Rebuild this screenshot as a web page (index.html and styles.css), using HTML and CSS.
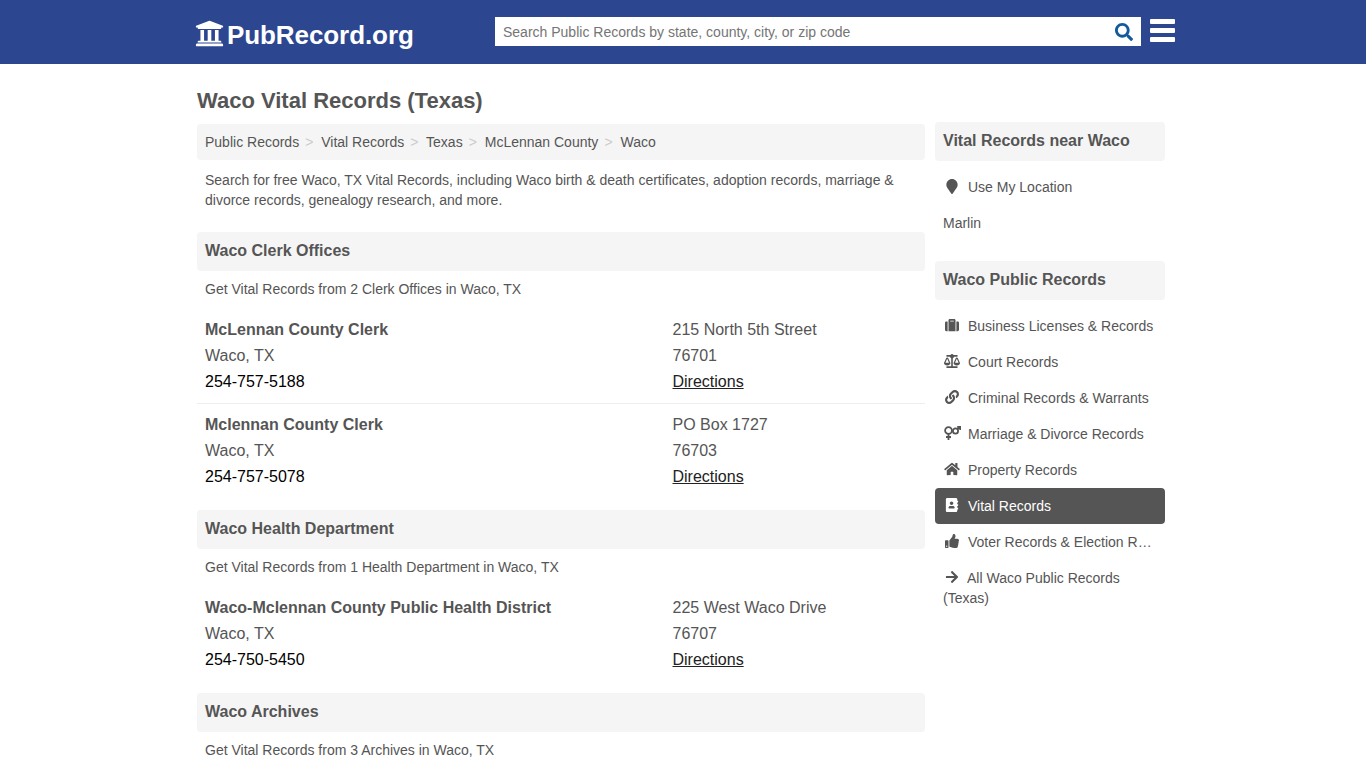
FILE: index.html
```html
<!DOCTYPE html>
<html lang="en">
<head>
<meta charset="utf-8">
<title>Waco Vital Records (Texas)</title>
<link rel="stylesheet" href="styles.css">
</head>
<body>
<header class="topbar">
  <div class="topbar-inner">
    <a class="logo" href="#">
      <svg class="logo-icon" viewBox="0 0 512 512"><path d="M496 128v16a8 8 0 0 1-8 8h-24v12c0 6.627-5.373 12-12 12H60c-6.627 0-12-5.373-12-12v-12H24a8 8 0 0 1-8-8v-16a8 8 0 0 1 4.941-7.392l232-88a7.996 7.996 0 0 1 6.118 0l232 88A8 8 0 0 1 496 128zm-24 304H40c-13.255 0-24 10.745-24 24v16a8 8 0 0 0 8 8h464a8 8 0 0 0 8-8v-16c0-13.255-10.745-24-24-24zM96 192v192H60c-6.627 0-12 5.373-12 12v20h416v-20c0-6.627-5.373-12-12-12h-36V192h-64v192h-64V192h-64v192h-64V192H96z"/></svg>
      <span>PubRecord.org</span>
    </a>
    <form class="search">
      <input class="search-input" type="text" placeholder="Search Public Records by state, county, city, or zip code">
      <svg class="search-icon" viewBox="0 0 512 512"><path d="M505 442.7L405.3 343c-4.5-4.5-10.6-7-17-7H372c27.6-35.3 44-79.7 44-128C416 93.1 322.9 0 208 0S0 93.1 0 208s93.1 208 208 208c48.3 0 92.7-16.4 128-44v16.3c0 6.4 2.5 12.5 7 17l99.7 99.7c9.4 9.4 24.6 9.4 33.9 0l28.3-28.3c9.4-9.4 9.4-24.6.1-34zM208 336c-70.7 0-128-57.2-128-128 0-70.7 57.2-128 128-128 70.7 0 128 57.2 128 128 0 70.7-57.2 128-128 128z"/></svg>
    </form>
    <div class="burger"><i></i><i></i><i></i></div>
  </div>
</header>

<div class="page">
  <main class="main">
    <h1 class="title">Waco Vital Records (Texas)</h1>
    <nav class="crumbs">
      <a href="#">Public Records</a><b>&gt;</b>
      <a href="#">Vital Records</a><b>&gt;</b>
      <a href="#">Texas</a><b>&gt;</b>
      <a href="#">McLennan County</a><b>&gt;</b>
      <a href="#">Waco</a>
    </nav>
    <p class="intro">Search for free Waco, TX Vital Records, including Waco birth &amp; death certificates, adoption records, marriage &amp; divorce records, genealogy research, and more.</p>

    <section class="group">
      <h2 class="band">Waco Clerk Offices</h2>
      <p class="lead">Get Vital Records from 2 Clerk Offices in Waco, TX</p>
      <div class="entry">
        <div class="col-a"><div class="name">McLennan County Clerk</div><div>Waco, TX</div><div class="phone">254-757-5188</div></div>
        <div class="col-b"><div>215 North 5th Street</div><div>76701</div><div><a class="dir" href="#">Directions</a></div></div>
      </div>
      <div class="entry entry-next">
        <div class="col-a"><div class="name">Mclennan County Clerk</div><div>Waco, TX</div><div class="phone">254-757-5078</div></div>
        <div class="col-b"><div>PO Box 1727</div><div>76703</div><div><a class="dir" href="#">Directions</a></div></div>
      </div>
    </section>

    <section class="group">
      <h2 class="band">Waco Health Department</h2>
      <p class="lead">Get Vital Records from 1 Health Department in Waco, TX</p>
      <div class="entry">
        <div class="col-a"><div class="name">Waco-Mclennan County Public Health District</div><div>Waco, TX</div><div class="phone">254-750-5450</div></div>
        <div class="col-b"><div>225 West Waco Drive</div><div>76707</div><div><a class="dir" href="#">Directions</a></div></div>
      </div>
    </section>

    <section class="group">
      <h2 class="band">Waco Archives</h2>
      <p class="lead">Get Vital Records from 3 Archives in Waco, TX</p>
    </section>
  </main>

  <aside class="side">
    <h3 class="band side-band">Vital Records near Waco</h3>
    <ul class="links links-near">
      <li><a href="#"><span class="ico"><svg class="tall" viewBox="0 0 384 512"><path d="M172.268 501.67C26.97 291.031 0 269.413 0 192 0 85.961 85.961 0 192 0s192 85.961 192 192c0 77.413-26.97 99.031-172.268 309.67-9.535 13.774-29.93 13.773-39.464 0z"/></svg></span>Use My Location</a></li>
      <li><a href="#">Marlin</a></li>
    </ul>
    <h3 class="band side-band">Waco Public Records</h3>
    <ul class="links">
      <li><a href="#"><span class="ico"><svg viewBox="0 0 512 512"><path d="M128 480h256V80c0-26.5-21.5-48-48-48H176c-26.5 0-48 21.5-48 48v400zm64-384h128v32H192V96zm320 80v256c0 26.5-21.5 48-48 48h-48V128h48c26.5 0 48 21.5 48 48zM96 480H48c-26.5 0-48-21.5-48-48V176c0-26.5 21.5-48 48-48h48v352z"/></svg></span>Business Licenses &amp; Records</a></li>
      <li><a href="#"><span class="ico"><svg class="wide" viewBox="0 0 640 512" preserveAspectRatio="none"><path d="M256 336h-.02c0-16.18 1.34-8.73-85.05-181.51-17.65-35.29-68.19-35.36-85.87 0C-2.06 328.75.02 320.33.02 336H0c0 44.18 57.31 80 128 80s128-35.82 128-80zM128 176l72 144H56l72-144zm511.98 160c0-16.18 1.34-8.73-85.05-181.51-17.65-35.29-68.19-35.36-85.87 0-87.12 174.26-85.04 165.84-85.04 181.51H384c0 44.18 57.31 80 128 80s128-35.82 128-80h-.02zM440 320l72-144 72 144H440zm88 128H352V153.25c23.51-10.29 41.16-31.48 46.39-57.25H528c8.84 0 16-7.16 16-16V48c0-8.84-7.16-16-16-16H383.64C369.04 12.68 346.09 0 320 0s-49.04 12.68-63.64 32H112c-8.84 0-16 7.16-16 16v32c0 8.84 7.16 16 16 16h129.61c5.23 25.76 22.87 46.96 46.39 57.25V448H112c-8.84 0-16 7.16-16 16v32c0 8.84 7.16 16 16 16h416c8.84 0 16-7.16 16-16v-32c0-8.84-7.16-16-16-16z"/></svg></span>Court Records</a></li>
      <li><a href="#"><span class="ico"><svg viewBox="0 0 512 512"><path d="M326.612 185.391c59.747 59.809 58.927 155.698.36 214.59-.11.12-.24.25-.36.37l-67.2 67.2c-59.27 59.27-155.699 59.262-214.96 0-59.27-59.26-59.27-155.7 0-214.96l37.106-37.106c9.84-9.84 26.786-3.3 27.294 10.606.648 17.722 3.826 35.527 9.69 52.721 1.986 5.822.567 12.262-3.783 16.612l-13.087 13.087c-28.026 28.026-28.905 73.66-1.155 101.96 28.024 28.579 74.086 28.749 102.325.51l67.2-67.19c28.191-28.191 28.073-73.757 0-101.83-3.701-3.694-7.429-6.564-10.341-8.569a16.037 16.037 0 0 1-6.947-12.606c-.396-10.567 3.348-21.456 11.698-29.806l21.054-21.055c5.521-5.521 14.182-6.199 20.584-1.731a152.482 152.482 0 0 1 20.522 17.197zM467.547 44.449c-59.261-59.262-155.69-59.27-214.96 0l-67.2 67.2c-.12.12-.25.25-.36.37-58.566 58.892-59.387 154.781.36 214.59a152.454 152.454 0 0 0 20.521 17.196c6.402 4.468 15.064 3.789 20.584-1.731l21.054-21.055c8.35-8.35 12.094-19.239 11.698-29.806a16.037 16.037 0 0 0-6.947-12.606c-2.912-2.005-6.64-4.875-10.341-8.569-28.073-28.073-28.191-73.639 0-101.83l67.2-67.19c28.239-28.239 74.3-28.069 102.325.51 27.75 28.3 26.872 73.934-1.155 101.96l-13.087 13.087c-4.35 4.35-5.769 10.79-3.783 16.612 5.864 17.194 9.042 34.999 9.69 52.721.509 13.906 17.454 20.446 27.294 10.606l37.106-37.106c59.271-59.259 59.271-155.699.001-214.959z"/></svg></span>Criminal Records &amp; Warrants</a></li>
      <li><a href="#"><span class="ico"><svg class="gender" viewBox="0 0 17 14"><circle cx="4.5" cy="4.5" r="3.4"/><path d="M4.5 8v6M2 11h5"/><circle cx="11.5" cy="5" r="2.6"/><path d="M13.4 3.1L16 .8M13.2.9h3v3"/></svg></span>Marriage &amp; Divorce Records</a></li>
      <li><a href="#"><span class="ico"><svg class="wide" viewBox="0 0 576 512"><path d="M280.37 148.26L96 300.11V464a16 16 0 0 0 16 16l112.06-.29a16 16 0 0 0 15.92-16V368a16 16 0 0 1 16-16h64a16 16 0 0 1 16 16v95.64a16 16 0 0 0 16 16.05L464 480a16 16 0 0 0 16-16V300L295.67 148.26a12.19 12.19 0 0 0-15.3 0zM571.6 251.47L488 182.56V44.05a12 12 0 0 0-12-12h-56a12 12 0 0 0-12 12v72.61L318.47 43a48 48 0 0 0-61 0L4.34 251.47a12 12 0 0 0-1.6 16.9l25.5 31A12 12 0 0 0 45.15 301l235.22-193.74a12.19 12.19 0 0 1 15.3 0L530.9 301a12 12 0 0 0 16.9-1.6l25.5-31a12 12 0 0 0-1.7-16.93z"/></svg></span>Property Records</a></li>
      <li><a class="active" href="#"><span class="ico"><svg viewBox="0 0 448 512"><path d="M436 160c6.6 0 12-5.4 12-12v-40c0-6.6-5.4-12-12-12h-20V48c0-26.5-21.5-48-48-48H48C21.5 0 0 21.5 0 48v416c0 26.5 21.5 48 48 48h320c26.5 0 48-21.5 48-48v-48h20c6.6 0 12-5.4 12-12v-40c0-6.6-5.4-12-12-12h-20v-64h20c6.6 0 12-5.4 12-12v-40c0-6.6-5.4-12-12-12h-20v-64h20zm-228-32c35.3 0 64 28.7 64 64s-28.7 64-64 64-64-28.7-64-64 28.7-64 64-64zm112 236.8c0 10.6-10 19.2-22.4 19.2H118.4C106 384 96 375.4 96 364.8v-19.2c0-31.8 30.1-57.6 67.2-57.6h5c12.3 5.1 25.7 8 39.8 8s27.6-2.9 39.8-8h5c37.1 0 67.2 25.8 67.2 57.6v19.2z"/></svg></span>Vital Records</a></li>
      <li><a href="#"><span class="ico"><svg viewBox="0 0 512 512"><path d="M104 224H24c-13.255 0-24 10.745-24 24v240c0 13.255 10.745 24 24 24h80c13.255 0 24-10.745 24-24V248c0-13.255-10.745-24-24-24zM64 472c-13.255 0-24-10.745-24-24s10.745-24 24-24 24 10.745 24 24-10.745 24-24 24zM384 81.452c0 42.416-25.97 66.208-33.277 94.548h101.723c33.397 0 59.397 27.746 59.553 58.098.084 17.938-7.546 37.249-19.439 49.197l-.11.11c9.836 23.337 8.237 56.037-9.308 79.469 8.681 25.895-.069 57.704-16.382 74.757 4.298 17.598 2.244 32.575-6.148 44.632C440.202 511.587 389.616 512 346.839 512l-2.845-.001c-48.287-.017-87.806-17.598-119.56-31.725-15.957-7.099-36.821-15.887-52.651-16.178-6.54-.12-11.783-5.457-11.783-11.998v-213.77c0-3.2 1.282-6.271 3.558-8.521 39.614-39.144 56.648-80.587 89.117-113.111 14.804-14.832 20.188-37.236 25.393-58.902C282.515 39.293 291.817 0 312 0c24 0 72 8 72 81.452z"/></svg></span>Voter Records &amp; Election Records</a></li>
      <li><a class="wrap" href="#"><span class="ico ico-inline"><svg viewBox="0 0 448 512"><path d="M190.5 66.9l22.2-22.2c9.4-9.4 24.6-9.4 33.9 0L441 239c9.4 9.4 9.4 24.6 0 33.9L246.6 467.3c-9.4 9.4-24.6 9.4-33.9 0l-22.2-22.2c-9.5-9.5-9.3-25 .4-34.3L311.4 296H24c-13.3 0-24-10.7-24-24v-32c0-13.3 10.7-24 24-24h287.4L190.9 101.2c-9.8-9.3-10-24.8-.4-34.3z"/></svg></span>All Waco Public Records (Texas)</a></li>
    </ul>
  </aside>
</div>
</body>
</html>
```
FILE: styles.css
```css
* { box-sizing: border-box; }
html, body { margin: 0; padding: 0; }
body {
  font-family: "Liberation Sans", Arial, sans-serif;
  font-size: 14px;
  line-height: 20px;
  color: #555;
  background: #fff;
  height: 768px;
  overflow: hidden;
}
a { color: inherit; text-decoration: none; }

.topbar { height: 64px; background: #2d4690; }
.topbar-inner {
  width: 980px;
  margin-left: 195px;
  height: 64px;
  display: flex;
  align-items: flex-start;
}
.logo {
  width: 300px;
  display: flex;
  align-items: center;
  color: #fff;
  font-size: 26px;
  letter-spacing: -0.08px;
  line-height: 32px;
  font-weight: 700;
  padding-top: 19px;
}
.logo-icon { width: 29px; height: 29px; fill: #fff; margin-right: 3px; margin-top: -3px; }
.search {
  width: 646px;
  height: 29px;
  margin-top: 17px;
  background: #fff;
  display: flex;
  align-items: center;
  padding: 0 8px;
}
.search-input {
  flex: 1;
  border: 0;
  outline: 0;
  padding: 0;
  font: 14px "Liberation Sans", Arial, sans-serif;
  color: #555;
  background: transparent;
}
.search-input::placeholder { color: #757575; opacity: 1; }
.search-icon { width: 18px; height: 18px; fill: #125a9c; margin-top: 1px; }
.burger {
  width: 25px;
  margin-left: 9px;
  margin-top: 19px;
  display: flex;
  flex-direction: column;
  gap: 4px;
}
.burger i { display: block; height: 5px; border-radius: 1px; background: #fff; }

.page { width: 968px; margin-left: 197px; display: flex; gap: 10px; align-items: flex-start; }
.main { width: 728px; }
.side { width: 230px; padding-top: 58px; }

.title { margin: 24px 0 11px; font-size: 22px; line-height: 25px; font-weight: 700; color: #555; }
.crumbs {
  height: 36px;
  padding: 8px;
  background: #f5f5f5;
  border-radius: 4px;
  white-space: nowrap;
}
.crumbs b { font-weight: 400; color: #ccc; margin: 0 4px 0 6px; }
.intro { margin: 10px 0 0; padding: 0 8px; }

.band {
  margin: 0;
  height: 39px;
  padding: 9px 8px;
  background: #f5f5f5;
  border-radius: 4px;
  font-size: 16px;
  line-height: 20px;
  font-weight: 700;
  color: #555;
}
.group { margin-top: 22px; }
.group + .group { margin-top: 20px; }
.lead { margin: 8px 0 0; padding: 0 8px; }

.entry {
  display: flex;
  margin-top: 18px;
  padding: 0 8px;
  font-size: 16px;
  line-height: 26px;
}
.entry-next { margin-top: 8px; padding-top: 8px; border-top: 1px solid #eee; }
.col-a { width: 467.5px; }
.col-b { flex: 1; }
.name { font-weight: 700; }
.phone { color: #000; }
.dir { color: #222; text-decoration: underline; }

.links { list-style: none; margin: 8px 0 0; padding: 0; }
.links-near { margin-bottom: 20px; }
.links a {
  display: block;
  height: 36px;
  padding: 8px;
  border-radius: 4px;
  white-space: nowrap;
  overflow: hidden;
  text-overflow: ellipsis;
}
.links a.active { background: #555; color: #fff; }
.links a.wrap { height: auto; white-space: normal; overflow: visible; }
.ico {
  display: inline-block;
  width: 18px;
  height: 14px;
  margin-right: 7px;
  vertical-align: -2px;
  text-align: center;
}
.ico svg { display: inline-block; height: 14px; width: 14px; fill: currentColor; vertical-align: top; }
.ico svg.wide { width: 16px; }
.ico svg.tall { height: 15px; width: 12px; }
.ico svg.gender { width: 17px; fill: none; stroke: currentColor; stroke-width: 1.8; }
.ico-inline { margin-right: 6px; }
```
